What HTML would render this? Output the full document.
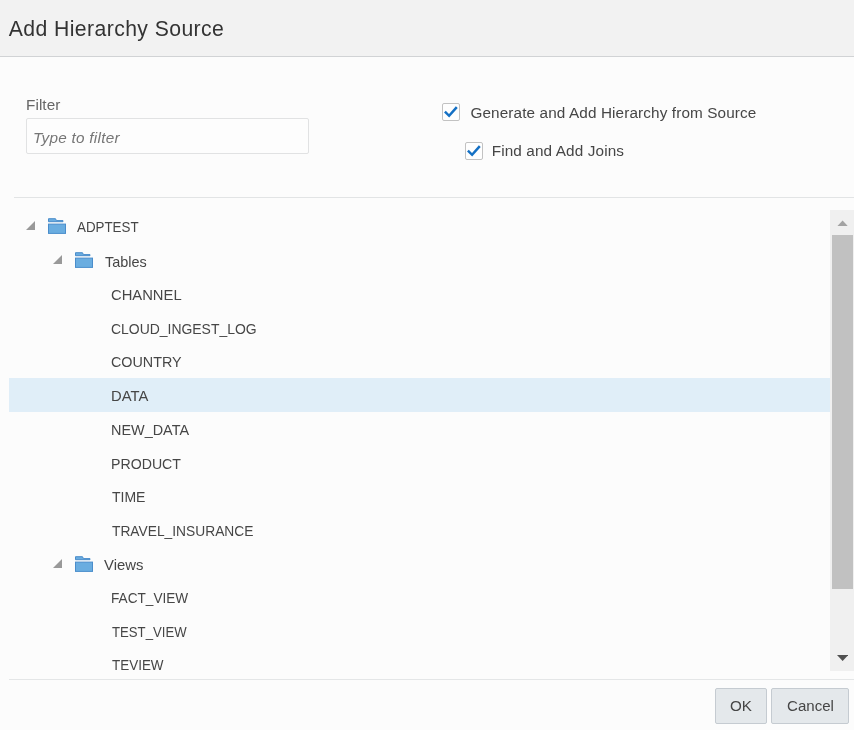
<!DOCTYPE html>
<html><head><meta charset="utf-8"><title>Add Hierarchy Source</title>
<style>
html,body{margin:0;padding:0;}
body{width:854px;height:730px;overflow:hidden;background:#fcfcfc;font-family:"Liberation Sans",sans-serif;color:#333;position:relative;}
.hdr{position:absolute;left:0;top:0;width:854px;height:56px;background:#f2f2f2;border-bottom:1px solid #d1d3d5;}
.inp{position:absolute;left:26px;top:118px;width:281px;height:34px;border:1px solid #e1e2e3;background:#fdfdfd;border-radius:2px;}
.cb{position:absolute;width:16px;height:16px;border:1px solid #c2c2c2;background:#fefefe;border-radius:2px;}
.cb svg{position:absolute;left:0;top:0;}
.sep{position:absolute;left:9px;width:845px;height:1px;background:#e4e6e7;}
.sel{position:absolute;left:9px;top:378px;width:821px;height:34px;background:#e0eef8;}
.t{position:absolute;transform-origin:0 0;line-height:20px;white-space:nowrap;color:#464646;filter:blur(0.45px);}
.tri{position:absolute;width:0;height:0;border-left:9px solid transparent;border-bottom:9px solid #999;}
.fold{position:absolute;}
.track{position:absolute;left:830px;top:210px;width:24px;height:461px;background:#f0f0f0;}
.thumb{position:absolute;left:832px;top:235px;width:21px;height:354px;background:#c1c1c1;}
.btn{position:absolute;top:688px;height:34px;border:1px solid #c5cbd1;background:#e4e8eb;border-radius:2px;}
</style></head><body>
<div class="hdr"><div class="t" id="title" style="left:8.70px;top:18.50px;font-size:21.2px;letter-spacing:0.417px;color:#333;">Add Hierarchy Source</div></div>
<div class="inp"><div class="t" id="ph" style="left:6.10px;top:9.10px;font-size:15.3px;letter-spacing:0.263px;color:#767676;font-style:italic;">Type to filter</div></div>
<div class="cb" style="left:442px;top:103px;"><svg width="16" height="16" viewBox="0 0 16 16"><path d="M1.9 7.7 L6.1 11.8 L13.8 3.1" fill="none" stroke="#1470c4" stroke-width="2.5"/></svg></div>
<div class="cb" style="left:465px;top:142px;"><svg width="16" height="16" viewBox="0 0 16 16"><path d="M1.9 7.7 L6.1 11.8 L13.8 3.1" fill="none" stroke="#1470c4" stroke-width="2.5"/></svg></div>
<div class="sep" style="top:197px;left:14px;width:840px;background:#e2e4e5;"></div>
<div class="sel"></div>

<div class="tri" style="left:26.0px;top:220.9px"></div>
<svg class="fold" style="left:48.0px;top:218.0px" width="19" height="17" viewBox="0 0 19 17"><path d="M0.5 0.7 H7.5 L8.4 2.6 H15 V3.7 H0.5Z" fill="#6aade0" stroke="#4a8dcb" stroke-width="1"/><rect x="0.5" y="6.1" width="17" height="9.3" fill="#6aade0" stroke="#4a8dcb" stroke-width="1"/></svg>
<div class="tri" style="left:52.9px;top:254.7px"></div>
<svg class="fold" style="left:75.0px;top:251.8px" width="19" height="17" viewBox="0 0 19 17"><path d="M0.5 0.7 H7.5 L8.4 2.6 H15 V3.7 H0.5Z" fill="#6aade0" stroke="#4a8dcb" stroke-width="1"/><rect x="0.5" y="6.1" width="17" height="9.3" fill="#6aade0" stroke="#4a8dcb" stroke-width="1"/></svg>
<div class="tri" style="left:52.9px;top:558.7px"></div>
<svg class="fold" style="left:75.0px;top:555.8px" width="19" height="17" viewBox="0 0 19 17"><path d="M0.5 0.7 H7.5 L8.4 2.6 H15 V3.7 H0.5Z" fill="#6aade0" stroke="#4a8dcb" stroke-width="1"/><rect x="0.5" y="6.1" width="17" height="9.3" fill="#6aade0" stroke="#4a8dcb" stroke-width="1"/></svg>
<div class="track"></div><div class="thumb"></div>
<svg style="position:absolute;left:837px;top:219.5px" width="11.2" height="6.5" viewBox="0 0 12 7" preserveAspectRatio="none"><path d="M0 7 L6 0.5 L12 7Z" fill="#a3a3a3"/></svg>
<svg style="position:absolute;left:837px;top:654.8px" width="11.2" height="6.4" viewBox="0 0 12 7" preserveAspectRatio="none"><path d="M0 0 L6 6.5 L12 0Z" fill="#505050"/></svg>
<div class="sep" style="top:679px;"></div>
<div class="btn" style="left:715px;width:50px;"><div class="t" id="ok" style="left:13.50px;top:7.00px;font-size:15.3px;transform:scaleX(0.9920);">OK</div></div>
<div class="btn" style="left:771px;width:76px;"><div class="t" id="cn" style="left:14.50px;top:7.00px;font-size:15.3px;transform:scaleX(0.9854);">Cancel</div></div>

<div class="t" id="flt" style="left:26.10px;top:95.00px;font-size:15.3px;letter-spacing:0.036px;color:#666;">Filter</div>
<div class="t" id="c1" style="left:470.40px;top:102.90px;font-size:15.3px;letter-spacing:0.122px;">Generate and Add Hierarchy from Source</div>
<div class="t" id="c2" style="left:491.70px;top:141.30px;font-size:15.3px;letter-spacing:0.127px;">Find and Add Joins</div>
<div class="t" id="r0" style="left:77.30px;top:217.40px;font-size:15.0px;transform:scaleX(0.8905);">ADPTEST</div>
<div class="t" id="r1" style="left:105.00px;top:251.61px;font-size:15.0px;transform:scaleX(0.9628);">Tables</div>
<div class="t" id="r2" style="left:110.50px;top:284.82px;font-size:15.0px;transform:scaleX(0.9849);">CHANNEL</div>
<div class="t" id="r3" style="left:110.70px;top:319.03px;font-size:15.0px;transform:scaleX(0.9292);">CLOUD_INGEST_LOG</div>
<div class="t" id="r4" style="left:110.70px;top:352.24px;font-size:15.0px;transform:scaleX(0.9558);">COUNTRY</div>
<div class="t" id="r5" style="left:111.00px;top:386.45px;font-size:15.0px;transform:scaleX(0.9861);">DATA</div>
<div class="t" id="r6" style="left:111.10px;top:419.66px;font-size:15.0px;transform:scaleX(0.9619);">NEW_DATA</div>
<div class="t" id="r7" style="left:111.10px;top:453.87px;font-size:15.0px;transform:scaleX(0.9434);">PRODUCT</div>
<div class="t" id="r8" style="left:112.10px;top:487.08px;font-size:15.0px;transform:scaleX(0.9341);">TIME</div>
<div class="t" id="r9" style="left:112.10px;top:521.29px;font-size:15.0px;transform:scaleX(0.9189);">TRAVEL_INSURANCE</div>
<div class="t" id="r10" style="left:104.30px;top:554.50px;font-size:15.0px;transform:scaleX(0.9913);">Views</div>
<div class="t" id="r11" style="left:111.00px;top:587.71px;font-size:15.0px;transform:scaleX(0.9080);">FACT_VIEW</div>
<div class="t" id="r12" style="left:112.00px;top:621.92px;font-size:15.0px;transform:scaleX(0.8772);">TEST_VIEW</div>
<div class="t" id="r13" style="left:112.00px;top:655.13px;font-size:15.0px;transform:scaleX(0.8962);">TEVIEW</div>
</body></html>
